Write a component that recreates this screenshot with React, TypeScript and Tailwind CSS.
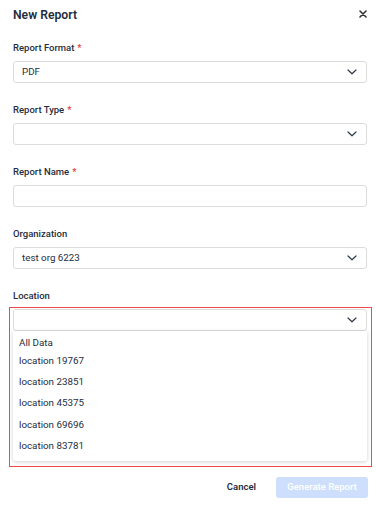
import React from "react";

const Chevron = () => (
  <svg width="10" height="6" viewBox="0 0 10 6" className="shrink-0">
    <path d="M1 1 L5 4.8 L9 1" fill="none" stroke="#2d3b4a" strokeWidth="1.2" strokeLinecap="round" strokeLinejoin="round" />
  </svg>
);

const Label = ({ text, req }: { text: string; req?: boolean }) => (
  <div className="h-[14px] text-[9.5px] leading-[14px] font-medium text-[#1f2d3d]">
    {text}
    {req && <span className="text-[#e53935] ml-[3px]">*</span>}
  </div>
);

const Select = ({ value }: { value?: string }) => (
  <div className="mt-[6px] h-[22px] w-[354px] rounded-[3px] border border-[#dcdcdc] flex items-center justify-between pl-[8px] pr-[9px] bg-white">
    <span className="text-[9.8px] text-[#1f2d3d]">{value ?? ""}</span>
    <Chevron />
  </div>
);

export default function App() {
  const options = ["location 19767", "location 23851", "location 45375", "location 69696", "location 83781"];
  return (
    <div
      className="w-[376px] h-[506px] bg-white pl-[13px] pr-[9px] relative"
      style={{ fontFamily: "Roboto, 'Noto Sans', sans-serif" }}
    >
      <div className="flex items-center justify-between pt-[6px] h-[24px]">
        <div className="text-[12.2px] leading-[18px] font-semibold text-[#1f2d3d]">New Report</div>
        <svg width="8" height="8" viewBox="0 0 8 8" className="mr-[0px] mt-[-2px]">
          <path d="M1 1 L7 7 M7 1 L1 7" stroke="#333" strokeWidth="1.6" strokeLinecap="round" />
        </svg>
      </div>

      <div className="mt-[17px]">
        <Label text="Report Format" req />
        <Select value="PDF" />
      </div>
      <div className="mt-[20px]">
        <Label text="Report Type" req />
        <Select />
      </div>
      <div className="mt-[20px]">
        <Label text="Report Name" req />
        <div className="mt-[6px] h-[22px] w-[354px] rounded-[3px] border border-[#dcdcdc]" />
      </div>
      <div className="mt-[20px]">
        <Label text="Organization" />
        <Select value="test org 6223" />
      </div>
      <div className="mt-[20px]">
        <Label text="Location" />
        <div className="relative mt-[6px] w-[354px]">
          <div className="absolute -top-[2px] -left-[4px] -right-[5px] -bottom-[6px] border-[1.5px] border-[#f24a4a] pointer-events-none" />
          <div className="h-[22px] w-[354px] rounded-[3px] border border-[#dcdcdc] flex items-center justify-end pr-[9px]">
            <Chevron />
          </div>
          <div className="w-[354px] h-[130px] bg-white rounded-b-[3px] shadow-[0_1px_4px_rgba(0,0,0,0.18)] pl-[6px] pt-[4px]">
            <div className="h-[15px] leading-[15px] text-[9.8px] text-[#1f2d3d]">All Data</div>
            <div>
              {options.map((o) => (
                <div key={o} className="h-[21.2px] leading-[21px] text-[9.8px] text-[#1f2d3d]">
                  {o}
                </div>
              ))}
            </div>
          </div>
        </div>
      </div>

      <div className="mt-[16px] flex items-center justify-end w-[355px] gap-[20px]">
        <span className="text-[9.5px] font-semibold text-[#1f2d3d]">Cancel</span>
        <div className="h-[21px] w-[92px] rounded-[3px] bg-[#cddffc] flex items-center justify-center text-[9.5px] font-medium text-white">
          Generate Report
        </div>
      </div>
    </div>
  );
}
